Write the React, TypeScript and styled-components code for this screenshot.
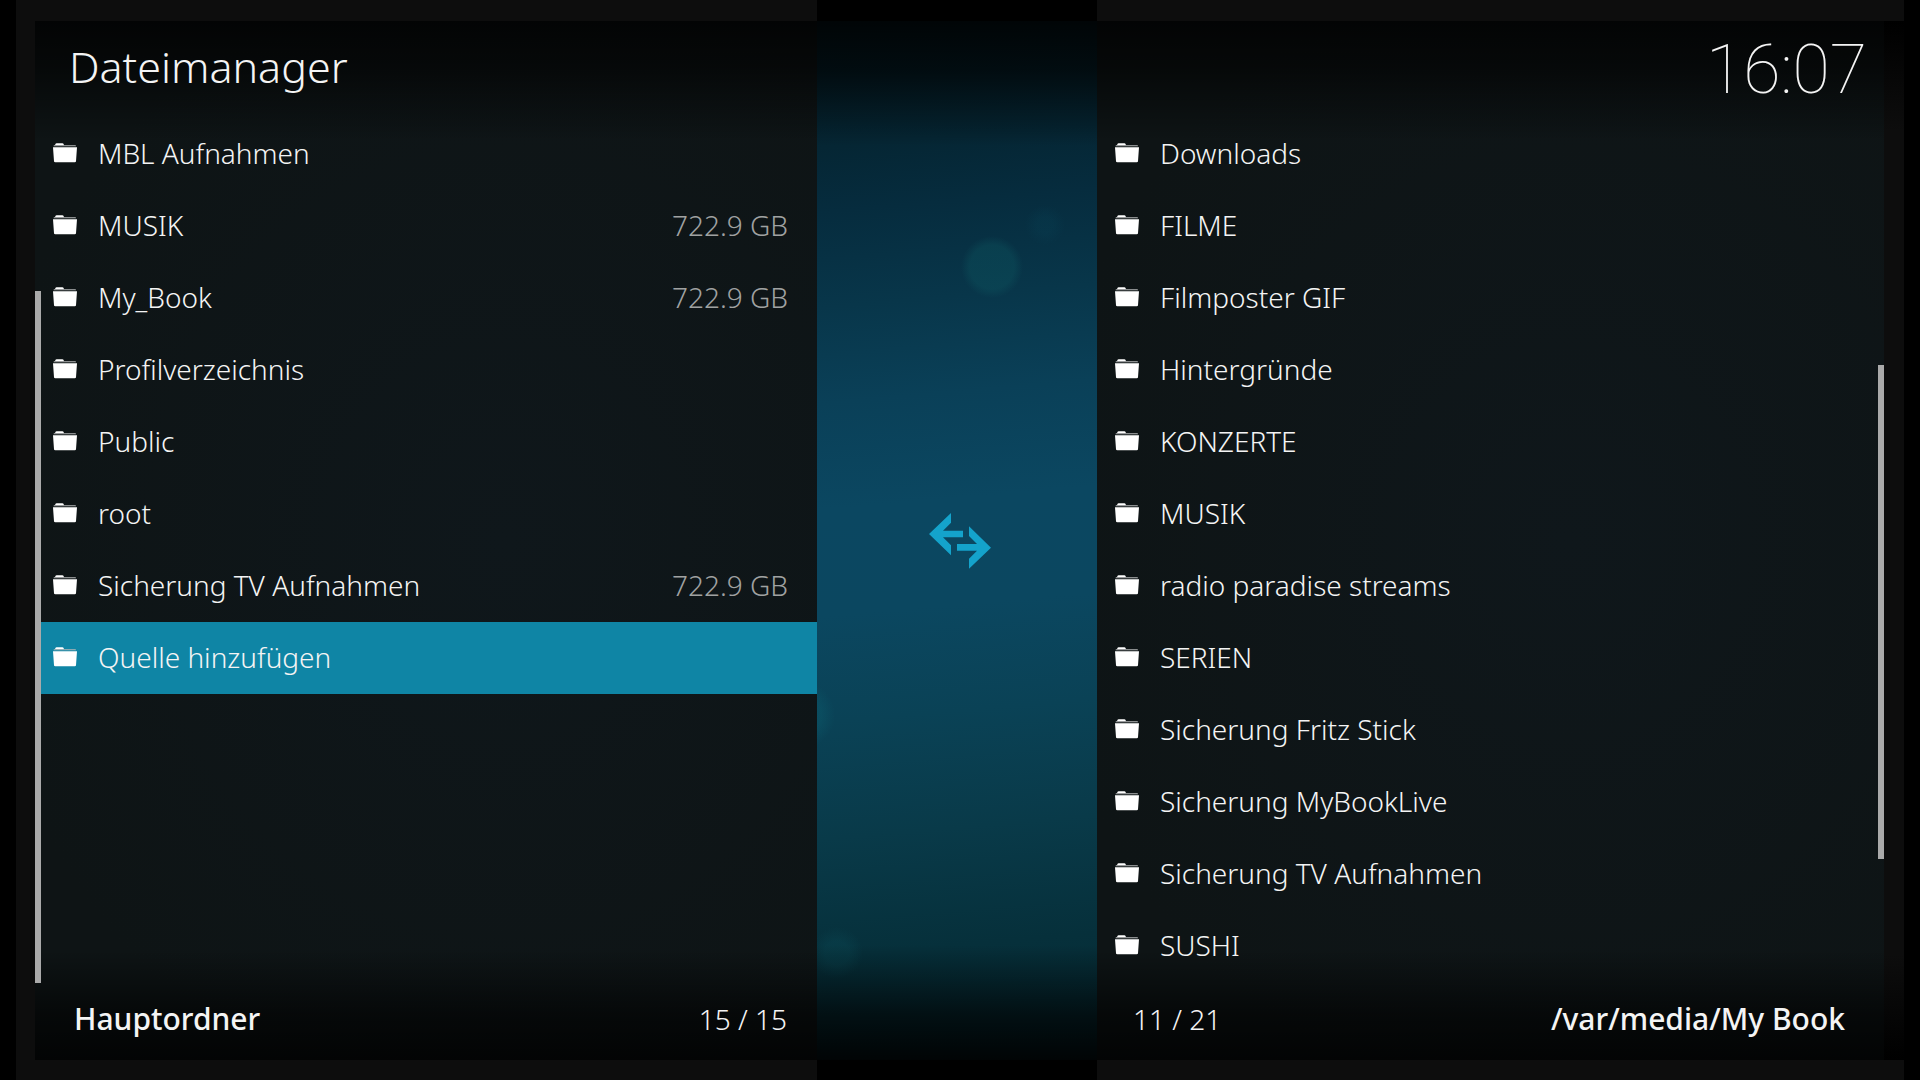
import React from "react";
import styled, { createGlobalStyle, css } from "styled-components";

type Side = "left" | "right";

interface Entry {
  name: string;
  size?: string;
  selected?: boolean;
}

interface Pane {
  side: Side;
  path: string;
  position: number;
  total: number;
  offset: number;
  entries: Entry[];
}

const VISIBLE_ROWS = 12;
const ROW_HEIGHT = 72;

const leftPane: Pane = {
  side: "left",
  path: "Hauptordner",
  position: 15,
  total: 15,
  offset: 3,
  entries: [
    { name: "MBL Aufnahmen" },
    { name: "MUSIK", size: "722.9 GB" },
    { name: "My_Book", size: "722.9 GB" },
    { name: "Profilverzeichnis" },
    { name: "Public" },
    { name: "root" },
    { name: "Sicherung TV Aufnahmen", size: "722.9 GB" },
    { name: "Quelle hinzufügen", selected: true },
  ],
};

const rightPane: Pane = {
  side: "right",
  path: "/var/media/My Book",
  position: 11,
  total: 21,
  offset: 6,
  entries: [
    { name: "Downloads" },
    { name: "FILME" },
    { name: "Filmposter GIF" },
    { name: "Hintergründe" },
    { name: "KONZERTE" },
    { name: "MUSIK" },
    { name: "radio paradise streams" },
    { name: "SERIEN" },
    { name: "Sicherung Fritz Stick" },
    { name: "Sicherung MyBookLive" },
    { name: "Sicherung TV Aufnahmen" },
    { name: "SUSHI" },
  ],
};

const GlobalStyle = createGlobalStyle`
  *, *::before, *::after { box-sizing: border-box; }
  body {
    margin: 0;
    background: #000;
    color: #f4f4f4;
    font-family: "Noto Sans", "Open Sans", sans-serif;
    font-size: 28px;
    font-weight: 300;
    line-height: 40px;
  }
`;

const Screen = styled.main`
  display: grid;
  grid-template-columns: 801fr 280fr 807fr;
  min-height: 100vh;
  padding: 0 16px;
  background: #000;
`;

const Frame = styled.section<{ $side: Side }>`
  display: flex;
  min-width: 0;
  padding: 21px 0 20px;
  background: #0d0d0d;
  ${({ $side }) =>
    $side === "left"
      ? css`
          padding-left: 19px;
        `
      : css`
          padding-right: 20px;
          background:
            linear-gradient(#000, #0d0d0d 110px, #0d0d0d calc(100% - 105px), #000)
              right 0 top 21px / 20px calc(100% - 41px) no-repeat,
            #0d0d0d;
        `}
`;

const Surface = styled.div`
  display: flex;
  flex: 1;
  flex-direction: column;
  min-width: 0;
  background:
    linear-gradient(rgba(0, 0, 0, 0.8), rgba(0, 0, 0, 0.6) 45px, transparent 120px),
    linear-gradient(to top, rgba(0, 0, 0, 0.8), rgba(0, 0, 0, 0.6) 45px, transparent 110px),
    radial-gradient(ellipse at 60% 50%, #0f171b, #0e1415 80%);
`;

const Header = styled.header<{ $side: Side }>`
  display: flex;
  justify-content: ${({ $side }) => ($side === "left" ? "flex-start" : "flex-end")};
  height: 97px;
  padding: 9px 17px 0 34px;
`;

const Title = styled.h1`
  margin: 0;
  font-size: 43px;
  font-weight: 300;
  line-height: 74px;
`;

const Clock = styled.time`
  font-family: Roboto, sans-serif;
  font-size: 68px;
  font-weight: 100;
  line-height: 80px;
`;

const Body = styled.div<{ $side: Side }>`
  display: flex;
  flex: 1;
  flex-direction: ${({ $side }) => ($side === "left" ? "row" : "row-reverse")};
`;

const Track = styled.div`
  flex: none;
  width: 6px;
`;

const Thumb = styled.div`
  background: #aaa;
`;

const List = styled.ul`
  flex: 1;
  min-width: 0;
  margin: 0;
  padding: 0;
  list-style: none;
`;

const Row = styled.button<{ $side: Side; $selected?: boolean }>`
  display: flex;
  align-items: center;
  gap: 21px;
  width: 100%;
  height: ${ROW_HEIGHT}px;
  padding: 0 29px 3px ${({ $side }) => ($side === "left" ? 12 : 18)}px;
  border: 0;
  background: ${({ $selected }) => ($selected ? "#0f85a5" : "transparent")};
  color: inherit;
  font: inherit;
  text-align: left;
  cursor: pointer;
`;

const Name = styled.span`
  flex: 1;
  min-width: 0;
  overflow: hidden;
  text-overflow: ellipsis;
  white-space: nowrap;
`;

const Size = styled.span`
  color: #a0a2a2;
  white-space: nowrap;
`;

const Footer = styled.footer<{ $side: Side }>`
  display: flex;
  flex-direction: ${({ $side }) => ($side === "left" ? "row" : "row-reverse")};
  align-items: center;
  justify-content: space-between;
  height: 77px;
  padding: ${({ $side }) => ($side === "left" ? "0 30px 6px 39px" : "0 39px 6px 36px")};
`;

const Path = styled.strong`
  font-size: 30px;
  font-weight: 500;
`;

const Gap = styled.div`
  display: grid;
  place-items: center;
  padding-left: 6px;
  border: solid #000;
  border-width: 21px 0 20px;
  background:
    linear-gradient(rgba(0, 0, 0, 0.85), rgba(0, 0, 0, 0.65) 50px, transparent 125px),
    linear-gradient(to top, rgba(0, 0, 0, 0.9), rgba(0, 0, 0, 0.65) 45px, transparent 115px),
    radial-gradient(circle at 175px 246px, rgba(14, 92, 100, 0.32) 22px, transparent 31px),
    radial-gradient(circle at 228px 204px, rgba(10, 80, 100, 0.15) 8px, transparent 20px),
    radial-gradient(circle at -16px 694px, rgba(12, 100, 115, 0.3) 20px, transparent 34px),
    radial-gradient(circle at 20px 932px, rgba(12, 84, 96, 0.25) 12px, transparent 26px),
    linear-gradient(
      175deg,
      #04202a 0,
      #052634 12%,
      #062c3e 18%,
      #08364a 27%,
      #0a4058 36%,
      #0b4761 46%,
      #0b4760 56%,
      #0a4256 66%,
      #093a49 77%,
      #06303b 88%,
      #052a33 100%
    );
`;

const SwapButton = styled.button`
  display: block;
  padding: 0;
  border: 0;
  background: none;
  color: #14a3cb;
  cursor: pointer;
`;

const SwapSvg = styled.svg`
  display: block;
  width: 62px;
  height: 56px;
`;

const FolderSvg = styled.svg`
  flex: none;
  width: 24px;
  height: 20px;
`;

function FolderIcon() {
  return (
    <FolderSvg viewBox="0 0 72 60" aria-hidden="true">
      <path d="M7 4q1-3 4-3h17q3 0 4 3l1 3H6z" fill="#fff" />
      <path d="M3 7h64q2 0 2 3H2q0-3 1-3z" fill="#b5b7b8" />
      <path d="M0 13h72l-3 42q0 3-4 3H7q-4 0-4-3z" fill="#fff" />
    </FolderSvg>
  );
}

function SwapIcon() {
  return (
    <SwapSvg viewBox="0 0 186 168" fill="currentColor" aria-hidden="true">
      <path d="M0 63 66 0v29L42 53h60v20H42l24 24v30z" />
      <path d="m186 104-66-64v29l24 24H84v20h60l-24 24v30z" />
    </SwapSvg>
  );
}

function FilePane({ pane, heading }: { pane: Pane; heading: React.ReactNode }) {
  const { side, entries, offset, total, position, path } = pane;
  return (
    <Frame $side={side} aria-label={path}>
      <Surface>
        <Header $side={side}>{heading}</Header>
        <Body $side={side}>
          <Track>
            <Thumb
              style={{
                height: `${(VISIBLE_ROWS / total) * 100}%`,
                marginTop: (offset / total) * VISIBLE_ROWS * ROW_HEIGHT,
              }}
            />
          </Track>
          <List>
            {entries.map((entry) => (
              <li key={entry.name}>
                <Row type="button" $side={side} $selected={entry.selected}>
                  <FolderIcon />
                  <Name>{entry.name}</Name>
                  {entry.size && <Size>{entry.size}</Size>}
                </Row>
              </li>
            ))}
          </List>
        </Body>
        <Footer $side={side}>
          <Path>{path}</Path>
          <span>
            {position} / {total}
          </span>
        </Footer>
      </Surface>
    </Frame>
  );
}

export default function App() {
  return (
    <>
      <GlobalStyle />
      <Screen>
        <FilePane pane={leftPane} heading={<Title>Dateimanager</Title>} />
        <Gap>
          <SwapButton type="button" aria-label="Seite wechseln">
            <SwapIcon />
          </SwapButton>
        </Gap>
        <FilePane pane={rightPane} heading={<Clock>16:07</Clock>} />
      </Screen>
    </>
  );
}
